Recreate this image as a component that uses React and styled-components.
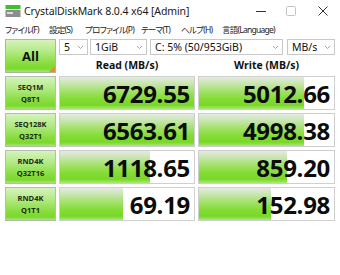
import React from 'react'
import styled, { createGlobalStyle } from 'styled-components'

const GlobalStyle = createGlobalStyle`
  html, body {
    margin: 0;
    padding: 0;
    background: #ffffff;
  }
  body {
    font-family: "Noto Sans", "Noto Sans CJK JP", sans-serif;
  }
`

const Window = styled.div`
  width: 340px;
  height: 275px;
  display: flex;
  flex-direction: column;
  background: #ffffff;
  overflow: hidden;
`

const TitleBar = styled.div`
  height: 21px;
  display: flex;
  align-items: center;
  padding-left: 5px;
`

const Title = styled.span`
  margin-left: 3px;
  font-size: 10.5px;
  color: #1a1a1a;
  letter-spacing: -0.1px;
`

const Controls = styled.div`
  margin-left: auto;
  display: flex;
  align-items: center;
  height: 100%;
`

const CtrlBtn = styled.div`
  width: ${p => p.$w}px;
  height: 100%;
  display: flex;
  align-items: center;
  justify-content: center;
  color: ${p => (p.$dim ? '#c4c4c4' : '#333')};
`

const MenuBar = styled.div`
  height: 15px;
  display: flex;
  align-items: center;
  padding-left: 5px;
  font-family: "Noto Sans", "Noto Sans CJK JP", sans-serif;
  font-feature-settings: "palt";
  font-size: 8.5px;
  color: #222;
  white-space: nowrap;
`

const MenuItem = styled.span`
  width: ${p => p.$w}px;
  flex: none;
  letter-spacing: -0.75px;
`

const Main = styled.div`
  display: grid;
  grid-template-columns: 51px 136px 137px;
  column-gap: 3px;
  row-gap: 3px;
  padding: 3px 0 0 5px;
`

const greenFace = `linear-gradient(to bottom, #d6f3bd 0%, #b3ea86 35%, #86dc3c 75%, #7cd82c 90%, #a6e676 100%)`

const AllButton = styled.div`
  position: relative;
  height: 34px;
  box-sizing: border-box;
  border: 1px solid #a9b8a0;
  background: ${greenFace};
  display: flex;
  align-items: center;
  justify-content: center;
  font-family: "Open Sans", sans-serif;
  font-weight: 700;
  font-size: 13px;
  color: #111;
  &::after {
    content: '';
    position: absolute;
    right: 0;
    bottom: 0;
    border-style: solid;
    border-width: 0 0 6px 6px;
    border-color: transparent transparent #f08a24 transparent;
  }
`

const TopRight = styled.div`
  grid-column: 2 / span 2;
  display: flex;
  flex-direction: column;
`

const SelectRow = styled.div`
  display: flex;
  gap: 2px;
  height: 16px;
`

const Select = styled.div`
  width: ${p => p.$w}px;
  margin-left: ${p => p.$ml || 0}px;
  box-sizing: border-box;
  border: 1px solid #c8c8c8;
  background: #fff;
  display: flex;
  align-items: center;
  padding: 0 3px 0 4px;
  font-size: 10.5px;
  color: #111;
  white-space: nowrap;
`

const Chevron = styled.span`
  margin-left: auto;
  display: flex;
  color: #9a9a9a;
`

const Headers = styled.div`
  display: grid;
  grid-template-columns: 136px 137px;
  column-gap: 3px;
  height: 18px;
  align-items: center;
`

const Header = styled.div`
  text-align: center;
  font-family: "Open Sans", sans-serif;
  font-weight: 700;
  font-size: 10.5px;
  color: #111;
  padding-top: 2px;
`

const Label = styled.div`
  height: 34px;
  box-sizing: border-box;
  border: 1px solid #b4bdb0;
  background: ${greenFace};
  display: flex;
  flex-direction: column;
  align-items: center;
  justify-content: center;
  font-family: "Open Sans", sans-serif;
  font-weight: 700;
  font-size: 7.5px;
  line-height: 12px;
  color: #1c2a14;
`

const Meter = styled.div`
  position: relative;
  height: 34px;
  box-sizing: border-box;
  border: 1px solid #cfcfcf;
  background: #fff;
  overflow: hidden;
`

const Fill = styled.div`
  position: absolute;
  left: 0;
  top: 0;
  bottom: 0;
  background: linear-gradient(to bottom, #e4ebe0 0%, #cbe6b6 18%, #a6e270 42%, #84dc34 68%, #78d826 88%, #a9e77a 100%);
`

const Value = styled.div`
  position: relative;
  height: 100%;
  display: flex;
  align-items: center;
  justify-content: flex-end;
  padding-right: 4px;
  font-family: "Open Sans", sans-serif;
  font-weight: 700;
  font-size: 24px;
  letter-spacing: -0.3px;
  color: #0c0c0c;
`

const AppIcon = () => (
  <svg width="16" height="14" viewBox="0 0 16 14">
    <rect x="0.5" y="1" width="15" height="4" fill="#3fbf2a" />
    <rect x="0.5" y="6" width="15" height="7" fill="#8d8d8d" />
    <rect x="2" y="8" width="6" height="2" fill="#dcdcdc" />
  </svg>
)

const ChevronIcon = () => (
  <svg width="7" height="5" viewBox="0 0 7 5">
    <path d="M1 1 L3.5 3.5 L6 1" fill="none" stroke="currentColor" strokeWidth="0.9" />
  </svg>
)

const rows = [
  { a: 'SEQ1M', b: 'Q8T1', read: '6729.55', rp: 100, write: '5012.66', wp: 78 },
  { a: 'SEQ128K', b: 'Q32T1', read: '6563.61', rp: 100, write: '4998.38', wp: 78 },
  { a: 'RND4K', b: 'Q32T16', read: '1118.65', rp: 67, write: '859.20', wp: 65 },
  { a: 'RND4K', b: 'Q1T1', read: '69.19', rp: 47, write: '152.98', wp: 53 },
]

const menu = [
  ['ファイル(F)', 44],
  ['設定(S)', 36],
  ['プロファイル(P)', 56],
  ['テーマ(T)', 40],
  ['ヘルプ(H)', 41],
  ['言語(Language)', 70],
]

const App = () => {
  return (
    <Window>
      <GlobalStyle />
      <TitleBar>
        <AppIcon />
        <Title>CrystalDiskMark 8.0.4 x64 [Admin]</Title>
        <Controls>
          <CtrlBtn $w={30}>
            <svg width="10" height="10" viewBox="0 0 10 10">
              <path d="M0 5.5 H10" stroke="currentColor" strokeWidth="1" />
            </svg>
          </CtrlBtn>
          <CtrlBtn $w={30} $dim>
            <svg width="10" height="10" viewBox="0 0 10 10">
              <rect x="0.5" y="0.5" width="9" height="9" rx="1" fill="none" stroke="currentColor" />
            </svg>
          </CtrlBtn>
          <CtrlBtn $w={34}>
            <svg width="10" height="10" viewBox="0 0 10 10">
              <path d="M0.5 0.5 L9.5 9.5 M9.5 0.5 L0.5 9.5" stroke="currentColor" strokeWidth="1" />
            </svg>
          </CtrlBtn>
        </Controls>
      </TitleBar>
      <MenuBar>
        {menu.map(([m, w]) => <MenuItem key={m} $w={w}>{m}</MenuItem>)}
      </MenuBar>
      <Main>
        <AllButton>All</AllButton>
        <TopRight>
          <SelectRow>
            <Select $w={29}>5<Chevron><ChevronIcon /></Chevron></Select>
            <Select $w={57}>1GiB<Chevron><ChevronIcon /></Chevron></Select>
            <Select $w={133} $ml={1}>C: 5% (50/953GiB)<Chevron><ChevronIcon /></Chevron></Select>
            <Select $w={48} $ml={2}>MB/s<Chevron><ChevronIcon /></Chevron></Select>
          </SelectRow>
          <Headers>
            <Header>Read (MB/s)</Header>
            <Header>Write (MB/s)</Header>
          </Headers>
        </TopRight>
        {rows.map((r, i) => (
          <React.Fragment key={i}>
            <Label>
              <span>{r.a}</span>
              <span>{r.b}</span>
            </Label>
            <Meter>
              <Fill style={{ width: `${r.rp}%` }} />
              <Value>{r.read}</Value>
            </Meter>
            <Meter>
              <Fill style={{ width: `${r.wp}%` }} />
              <Value>{r.write}</Value>
            </Meter>
          </React.Fragment>
        ))}
      </Main>
    </Window>
  )
}

export default App
